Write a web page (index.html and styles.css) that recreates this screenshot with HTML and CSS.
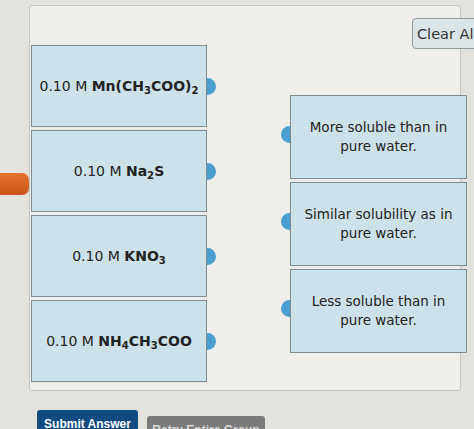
FILE: index.html
```html
<!DOCTYPE html>
<html>
<head>
    <title>Solubility Matching</title>
    <meta name="viewport" content="width=device-width, initial-scale=1.0">
    <link rel="stylesheet" href="styles.css">
</head>
<body>
    <div class="page">
        <div class="side-tab"></div>
        <div class="main">
            <div class="panel">
                <div class="toolbar">
                    <button class="clear-btn">Clear All</button>
                </div>
                <div class="board">
                    <div class="column left-col">
                        <div class="tile source"><span>0.10 M <b>Mn(CH<sub>3</sub>COO)<sub>2</sub></b></span></div>
                        <div class="tile source"><span>0.10 M <b>Na<sub>2</sub>S</b></span></div>
                        <div class="tile source"><span>0.10 M <b>KNO<sub>3</sub></b></span></div>
                        <div class="tile source"><span>0.10 M <b>NH<sub>4</sub>CH<sub>3</sub>COO</b></span></div>
                    </div>
                    <div class="column right-col">
                        <div class="tile target"><span>More soluble than in<br>pure water.</span></div>
                        <div class="tile target"><span>Similar solubility as in<br>pure water.</span></div>
                        <div class="tile target"><span>Less soluble than in<br>pure water.</span></div>
                    </div>
                </div>
            </div>
            <div class="actions">
                <button class="btn submit">Submit Answer</button>
                <button class="btn retry">Retry Entire Group</button>
            </div>
        </div>
    </div>
</body>
</html>
```

FILE: styles.css
```css
html, body {
    overflow: hidden;
}

body {
    margin: 0;
    background-color: #e4e2dd;
    font-family: "DejaVu Sans", Verdana, sans-serif;
    color: #222;
}

.page {
    display: flex;
    padding-top: 5px;
}

.side-tab {
    width: 29px;
    height: 22px;
    margin-top: 168px;
    flex-shrink: 0;
    background: linear-gradient(#e4732c, #c9531a);
    border-radius: 0 7px 7px 0;
}

.main {
    display: flex;
    flex-direction: column;
}

.panel {
    width: 430px;
    height: 384px;
    background-color: #efeeeb;
    border: 1px solid #c4c4c0;
    border-radius: 3px;
}

.toolbar {
    height: 39px;
    padding-left: 382px;
    box-sizing: border-box;
    padding-top: 12px;
}

.clear-btn {
    width: 80px;
    height: 31px;
    padding: 0 0 0 4px;
    text-align: left;
    font-family: "DejaVu Sans", Verdana, sans-serif;
    font-size: 14.5px;
    color: #333;
    background-color: #dbe4e6;
    border: 1px solid #8e9a9d;
    border-radius: 4px;
}

.board {
    display: flex;
}

.column {
    display: flex;
    flex-direction: column;
    flex-shrink: 0;
    gap: 3px;
}

.left-col {
    margin-left: 1px;
    width: 176px;
}

.right-col {
    margin-left: 83px;
    margin-top: 50px;
    width: 177px;
}

.tile {
    position: relative;
    height: 82px;
    box-sizing: border-box;
    display: flex;
    align-items: center;
    justify-content: center;
    text-align: center;
    background-color: #cbe2ea;
    border: 1px solid #7d8c91;
    font-size: 14px;
    line-height: 19px;
}

.tile.target {
    height: 84px;
    font-size: 13.5px;
}

.tile sub {
    font-size: 72%;
    line-height: 0;
    vertical-align: -3px;
}

/* connector nubs */
.tile::after {
    content: "";
    position: absolute;
    top: 50%;
    width: 9px;
    height: 17px;
    margin-top: -8px;
    background-color: #4a9fd0;
}

.source::after {
    right: -10px;
    border-radius: 0 9px 9px 0;
}

.target::after {
    left: -10px;
    margin-top: -11px;
    border-radius: 9px 0 0 9px;
}

.actions {
    display: flex;
    gap: 9px;
    margin-top: 19px;
    margin-left: 8px;
}

.btn {
    height: 26px;
    padding: 2px 0 0;
    border: none;
    border-radius: 3px 3px 0 0;
    color: #fff;
    font-family: "Liberation Sans", Arial, sans-serif;
    font-weight: bold;
    font-size: 12px;
    align-self: flex-start;
}

.submit {
    width: 101px;
    background-color: #124b7f;
}

.retry {
    width: 118px;
    margin-top: 6px;
    background-color: #7b7b7b;
    color: #d8d8d8;
}
```
